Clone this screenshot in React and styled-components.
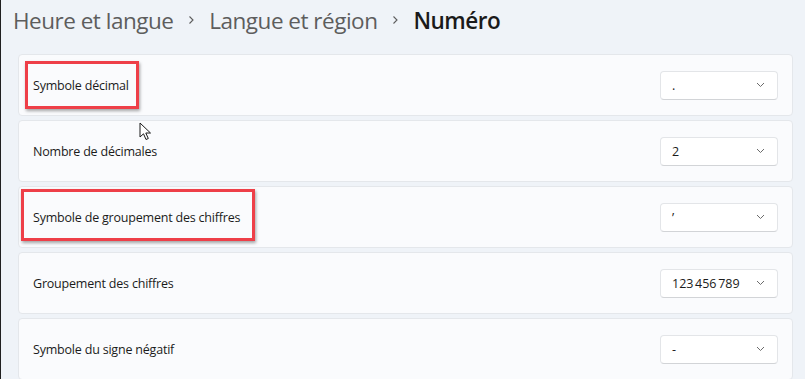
import React from 'react';
import styled, { createGlobalStyle } from 'styled-components';

const GlobalStyle = createGlobalStyle`
  html, body {
    margin: 0;
    padding: 0;
    background: #eff3f8;
  }
  body {
    font-family: 'Open Sans', 'Noto Sans', sans-serif;
    color: #1b1b1b;
  }
`;

const Page = styled.div`
  position: relative;
  width: 805px;
  height: 379px;
  overflow: hidden;
  box-sizing: border-box;
  border-left: 1px solid #202020;
  padding: 0 12px 0 17px;
  background: #eff3f8;
`;

const Breadcrumb = styled.div`
  display: flex;
  align-items: center;
  gap: 13px;
  height: 40px;
  margin-left: -5px;
  font-size: 22.5px;
  letter-spacing: -0.5px;
`;

const Crumb = styled.span`
  color: ${(p) => (p.$current ? '#1a1a1a' : '#5d5d5d')};
  font-weight: ${(p) => (p.$current ? 600 : 400)};
`;

const Sep = styled.svg`
  width: 10px;
  height: 10px;
  flex: none;
`;

const List = styled.div`
  display: flex;
  flex-direction: column;
  gap: 4px;
  margin-top: 14px;
`;

const Card = styled.div`
  position: relative;
  height: 62px;
  box-sizing: border-box;
  display: flex;
  align-items: center;
  justify-content: space-between;
  padding: 0 14px 0 14px;
  background: #fafbfd;
  border: 1px solid #e4e7eb;
  border-radius: 4px;
`;

const Label = styled.span`
  font-size: 12.5px;
  letter-spacing: -0.2px;
  color: #1b1b1b;
`;

const Select = styled.div`
  width: 118px;
  height: 29px;
  box-sizing: border-box;
  display: flex;
  align-items: center;
  justify-content: space-between;
  padding: 0 12px 0 11px;
  background: #ffffff;
  border: 1px solid #e3e5e8;
  border-bottom-color: #d2d4d7;
  border-radius: 4px;
  font-size: 12.5px;
  letter-spacing: -0.3px;
  color: #1b1b1b;
`;

const Chevron = styled.svg`
  width: 9px;
  height: 6px;
  flex: none;
`;

const Highlight = styled.div`
  position: absolute;
  left: ${(p) => p.$left}px;
  top: ${(p) => p.$top}px;
  width: ${(p) => p.$width}px;
  height: ${(p) => p.$height}px;
  box-sizing: border-box;
  border: 3px solid #ee3f48;
  box-shadow: 1px 2px 3px rgba(0, 0, 0, 0.35);
  pointer-events: none;
`;

const Cursor = styled.svg`
  position: absolute;
  left: 138px;
  top: 122px;
  width: 13px;
  height: 19px;
`;

const rows = [
  { label: 'Symbole décimal', value: '.', mark: { left: 6, top: 6, width: 114, height: 48 } },
  { label: 'Nombre de décimales', value: '2' },
  { label: 'Symbole de groupement des chiffres', value: '\u2019', mark: { left: 2, top: 2, width: 234, height: 52 } },
  { label: 'Groupement des chiffres', value: '123\u202F456\u202F789' },
  { label: 'Symbole du signe négatif', value: '-' },
];

const SepIcon = () => (
  <Sep viewBox="0 0 10 10">
    <path d="M3.5 1.5 L7 5 L3.5 8.5" fill="none" stroke="#5d5d5d" strokeWidth="1.1" />
  </Sep>
);

export default function App() {
  return (
    <>
      <GlobalStyle />
      <Page>
        <Breadcrumb>
          <Crumb>Heure et langue</Crumb>
          <SepIcon />
          <Crumb>Langue et région</Crumb>
          <SepIcon />
          <Crumb $current>Numéro</Crumb>
        </Breadcrumb>
        <List>
          {rows.map((row) => (
            <Card key={row.label}>
              <Label>{row.label}</Label>
              <Select>
                <span>{row.value}</span>
                <Chevron viewBox="0 0 9 6">
                  <path d="M1 1 L4.5 4.5 L8 1" fill="none" stroke="#6b6b6b" strokeWidth="1" />
                </Chevron>
              </Select>
              {row.mark && (
                <Highlight
                  $left={row.mark.left}
                  $top={row.mark.top}
                  $width={row.mark.width}
                  $height={row.mark.height}
                />
              )}
            </Card>
          ))}
        </List>
        <Cursor viewBox="0 0 13 19">
          <path
            d="M1 1 L1 15 L4.5 11.8 L7 17.5 L9.3 16.5 L6.8 11 L11.5 11 Z"
            fill="#ffffff"
            stroke="#1a1a1a"
            strokeWidth="1"
            strokeLinejoin="round"
          />
        </Cursor>
      </Page>
    </>
  );
}
